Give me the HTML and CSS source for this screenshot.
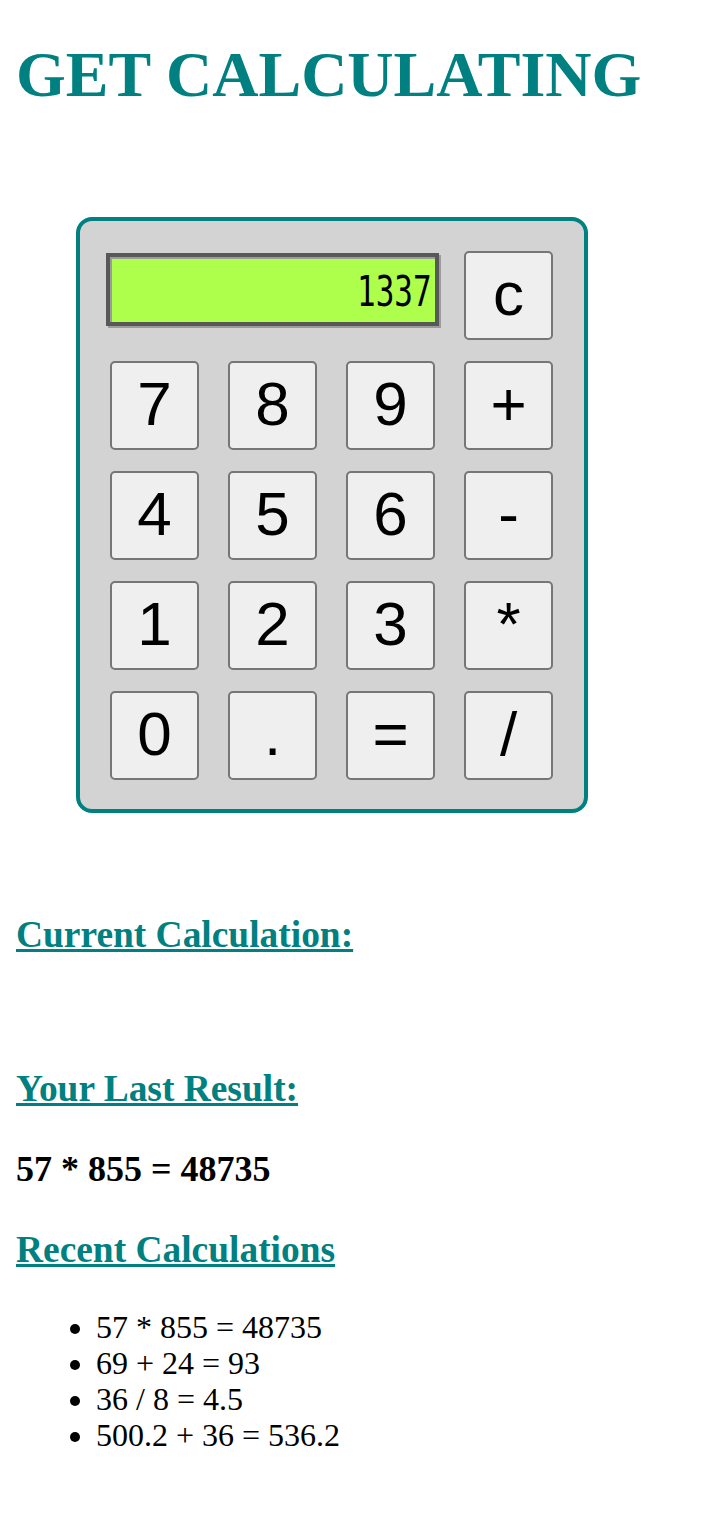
FILE: index.html
```html
<!DOCTYPE html>
<html lang="en">
<head>
<meta charset="utf-8">
<title>Get Calculating</title>
<link rel="stylesheet" href="styles.css">
</head>
<body>
<h1 class="title">GET CALCULATING</h1>

<div class="calculator">
  <div class="display"><span class="display-text">1337</span></div>
  <button class="key">c</button>
  <button class="key">7</button>
  <button class="key">8</button>
  <button class="key">9</button>
  <button class="key">+</button>
  <button class="key">4</button>
  <button class="key">5</button>
  <button class="key">6</button>
  <button class="key">-</button>
  <button class="key">1</button>
  <button class="key">2</button>
  <button class="key">3</button>
  <button class="key">*</button>
  <button class="key">0</button>
  <button class="key">.</button>
  <button class="key">=</button>
  <button class="key">/</button>
</div>

<h3 class="section-title">Current Calculation:</h3>
<p class="current-calc"></p>

<h3 class="section-title">Your Last Result:</h3>
<p class="last-result">57 * 855 = 48735</p>

<h3 class="section-title">Recent Calculations</h3>
<ul class="history">
  <li>57 * 855 = 48735</li>
  <li>69 + 24 = 93</li>
  <li>36 / 8 = 4.5</li>
  <li>500.2 + 36 = 536.2</li>
</ul>
</body>
</html>
```

FILE: styles.css
```css
html, body {
  background: #ffffff;
}

body {
  margin: 0;
  padding: 0 16px;
  font-family: "Liberation Serif", "Times New Roman", serif;
  font-size: 32px;
  color: #000000;
}

.title {
  margin: 37.6px 0 0;
  font-size: 64px;
  font-weight: bold;
  color: #008080;
}

.calculator {
  box-sizing: border-box;
  width: 512px;
  height: 596px;
  margin: 105px 0 100px 60px;
  padding: 30px 31px 29px 30px;
  background: #d3d3d3;
  border: 4px solid #008080;
  border-radius: 16px;
  display: grid;
  grid-template-columns: repeat(4, 89px);
  grid-template-rows: repeat(5, 89px);
  column-gap: 29px;
  row-gap: 21px;
}

.display {
  grid-column: 1 / span 3;
  justify-self: start;
  align-self: start;
  box-sizing: border-box;
  width: 333px;
  height: 73px;
  margin: 2px 0 0 -4px;
  border: 4px solid #585858;
  background: #adff4c;
  box-shadow: inset 2px 2px 0 #9b9b9b, 2px 2px 0 #9b9b9b;
  display: flex;
  align-items: center;
  justify-content: flex-end;
  padding: 4px 3px 0 0;
  overflow: hidden;
}

.display-text {
  display: inline-block;
  font-family: "DejaVu Sans Mono", "Liberation Mono", monospace;
  font-size: 43px;
  line-height: 44px;
  letter-spacing: 0;
  transform: scaleX(0.72);
  transform-origin: right center;
  color: #000000;
}

.key {
  box-sizing: border-box;
  width: 89px;
  height: 89px;
  margin: 0;
  padding: 0 0 3px;
  background: #efefef;
  border: 2px solid #767676;
  border-radius: 5px;
  font-family: "Liberation Sans", Arial, sans-serif;
  font-size: 62px;
  color: #000000;
  line-height: 1;
}

.section-title {
  margin: 37.44px 0;
  font-size: 37.44px;
  font-weight: bold;
  color: #008080;
  text-decoration: underline;
}

.current-calc {
  margin: 37.44px 0;
  min-height: 36.8px;
}

.last-result {
  margin: 38px 0;
  font-size: 36px;
  font-weight: bold;
  color: #000000;
}

.history {
  margin: 32px 0;
  padding-left: 80px;
}

.history li {
  line-height: 36px;
}
```
